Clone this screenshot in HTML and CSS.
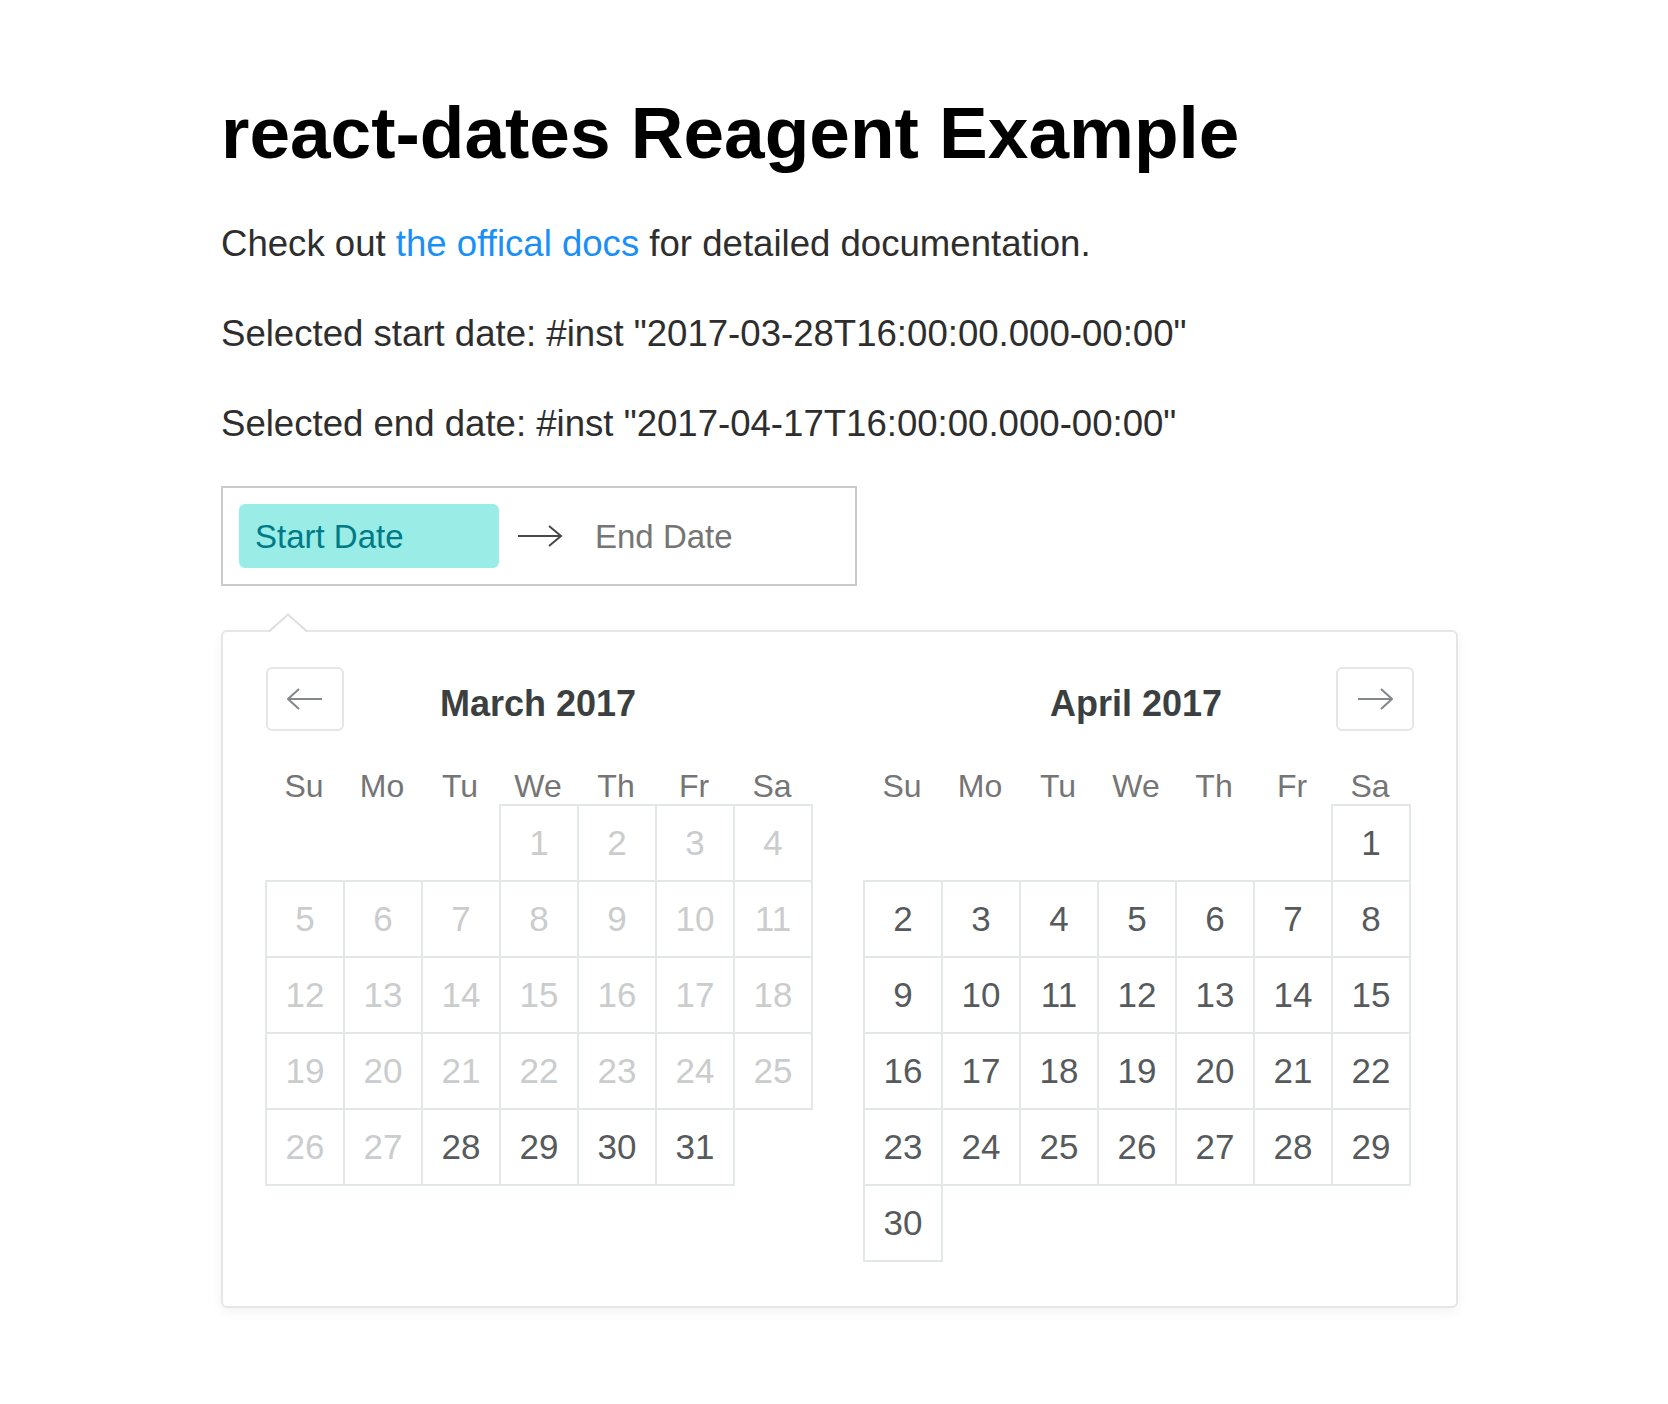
FILE: index.html
```html
<!DOCTYPE html>
<html>
<head>
<meta charset="utf-8">
<title>react-dates Reagent Example</title>
<link rel="stylesheet" href="styles.css">
</head>
<body>
<div class="page">
  <h1 class="title">react-dates Reagent Example</h1>
  <p class="text">Check out <a class="link" href="#">the offical docs</a> for detailed documentation.</p>
  <p class="text">Selected start date: #inst "2017-03-28T16:00:00.000-00:00"</p>
  <p class="text text-last">Selected end date: #inst "2017-04-17T16:00:00.000-00:00"</p>

  <div class="range-input">
    <div class="date-input"><div class="date-display date-display-focused">Start Date</div></div>
    <div class="range-arrow">
      <svg width="48" height="24" viewBox="0 0 48 24"><path d="M3 12H46M34 2L46 12L34 22" fill="none" stroke="#484848" stroke-width="2"/></svg>
    </div>
    <div class="date-input"><div class="date-display">End Date</div></div>
  </div>

  <div class="picker">
    <svg class="picker-caret" width="40" height="20" viewBox="0 0 40 20">
      <polygon points="0,20 20,1.5 40,20" fill="#fff"/>
      <path d="M1 18.5L20 1.5L39 18.5" fill="none" stroke="#dedede" stroke-width="2"/>
    </svg>
    <div class="nav-btn nav-prev">
      <svg width="36" height="22" viewBox="0 0 36 22"><path d="M1 11H35M12 1L1 11L12 21" fill="none" stroke="#82888a" stroke-width="2"/></svg>
    </div>
    <div class="nav-btn nav-next">
      <svg width="36" height="22" viewBox="0 0 36 22"><path d="M1 11H35M24 1L35 11L24 21" fill="none" stroke="#82888a" stroke-width="2"/></svg>
    </div>

    <div class="months">
      <div class="month">
        <div class="month-caption">March 2017</div>
        <div class="weekdays"><span>Su</span><span>Mo</span><span>Tu</span><span>We</span><span>Th</span><span>Fr</span><span>Sa</span></div>
        <div class="days">
          <div></div><div></div><div></div>
          <div class="day day-blocked">1</div><div class="day day-blocked">2</div><div class="day day-blocked">3</div><div class="day day-blocked">4</div>
          <div class="day day-blocked">5</div><div class="day day-blocked">6</div><div class="day day-blocked">7</div><div class="day day-blocked">8</div><div class="day day-blocked">9</div><div class="day day-blocked">10</div><div class="day day-blocked">11</div>
          <div class="day day-blocked">12</div><div class="day day-blocked">13</div><div class="day day-blocked">14</div><div class="day day-blocked">15</div><div class="day day-blocked">16</div><div class="day day-blocked">17</div><div class="day day-blocked">18</div>
          <div class="day day-blocked">19</div><div class="day day-blocked">20</div><div class="day day-blocked">21</div><div class="day day-blocked">22</div><div class="day day-blocked">23</div><div class="day day-blocked">24</div><div class="day day-blocked">25</div>
          <div class="day day-blocked">26</div><div class="day day-blocked">27</div><div class="day">28</div><div class="day">29</div><div class="day">30</div><div class="day">31</div>
        </div>
      </div>
      <div class="month">
        <div class="month-caption">April 2017</div>
        <div class="weekdays"><span>Su</span><span>Mo</span><span>Tu</span><span>We</span><span>Th</span><span>Fr</span><span>Sa</span></div>
        <div class="days">
          <div></div><div></div><div></div><div></div><div></div><div></div>
          <div class="day">1</div>
          <div class="day">2</div><div class="day">3</div><div class="day">4</div><div class="day">5</div><div class="day">6</div><div class="day">7</div><div class="day">8</div>
          <div class="day">9</div><div class="day">10</div><div class="day">11</div><div class="day">12</div><div class="day">13</div><div class="day">14</div><div class="day">15</div>
          <div class="day">16</div><div class="day">17</div><div class="day">18</div><div class="day">19</div><div class="day">20</div><div class="day">21</div><div class="day">22</div>
          <div class="day">23</div><div class="day">24</div><div class="day">25</div><div class="day">26</div><div class="day">27</div><div class="day">28</div><div class="day">29</div>
          <div class="day">30</div>
        </div>
      </div>
    </div>
  </div>
</div>
</body>
</html>
```

FILE: styles.css
```css
* { box-sizing: border-box; }

body {
  margin: 0;
  background: #fff;
  font-family: "Liberation Sans", Arial, Helvetica, sans-serif;
  color: #333;
}

.page {
  padding: 89px 0 80px 221px;
}

.title {
  margin: 0 0 40px;
  font-size: 73px;
  line-height: 88px;
  font-weight: 700;
  color: #000;
}

.text {
  margin: 0 0 36px;
  font-size: 36.6px;
  line-height: 54px;
  color: #2e2e2e;
}

.text-last { margin-bottom: 35px; }

.link {
  color: #1a8ff5;
  text-decoration: none;
}

.range-input {
  display: inline-flex;
  align-items: center;
  border: 2px solid #cacaca;
  background: #fff;
}

.date-input { padding: 16px; }

.date-display {
  width: 260px;
  height: 64px;
  padding: 0 16px;
  line-height: 66px;
  font-size: 33px;
  color: #757575;
  border-radius: 6px;
  white-space: nowrap;
}

.date-display-focused {
  background: #99ede6;
  color: #007a87;
}

.range-arrow {
  width: 48px;
  height: 24px;
  display: flex;
}

.picker {
  position: relative;
  width: 1237px;
  margin-top: 44px;
  padding: 0 21px 46px 16px;
  border: 2px solid #e6e6e6;
  border-radius: 6px;
  background: #fff;
  box-shadow: 0 4px 12px rgba(0, 0, 0, 0.05);
}

.picker-caret {
  position: absolute;
  left: 45px;
  top: -19px;
}

.nav-btn {
  position: absolute;
  top: 35px;
  width: 78px;
  height: 64px;
  border: 2px solid #e4e7e7;
  border-radius: 6px;
  background: #fff;
  display: flex;
  align-items: center;
  justify-content: center;
}

.nav-prev { left: 43px; }
.nav-next { right: 42px; }

.months { display: flex; }

.month {
  width: 598px;
  padding: 0 26px;
}

.month-caption {
  padding-top: 48px;
  line-height: 48px;
  font-size: 36px;
  font-weight: 700;
  color: #3c3f40;
  text-align: center;
}

.weekdays {
  display: grid;
  grid-template-columns: repeat(7, 78px);
  padding-top: 40px;
  line-height: 36px;
  font-size: 32px;
  color: #757575;
  text-align: center;
}

.days {
  display: grid;
  grid-template-columns: repeat(7, 78px);
  grid-auto-rows: 76px;
}

.day {
  width: 80px;
  height: 78px;
  border: 2px solid #e4e7e7;
  display: flex;
  align-items: center;
  justify-content: center;
  font-size: 35px;
  color: #565a5c;
}

.day-blocked { color: #cacccd; }
```
